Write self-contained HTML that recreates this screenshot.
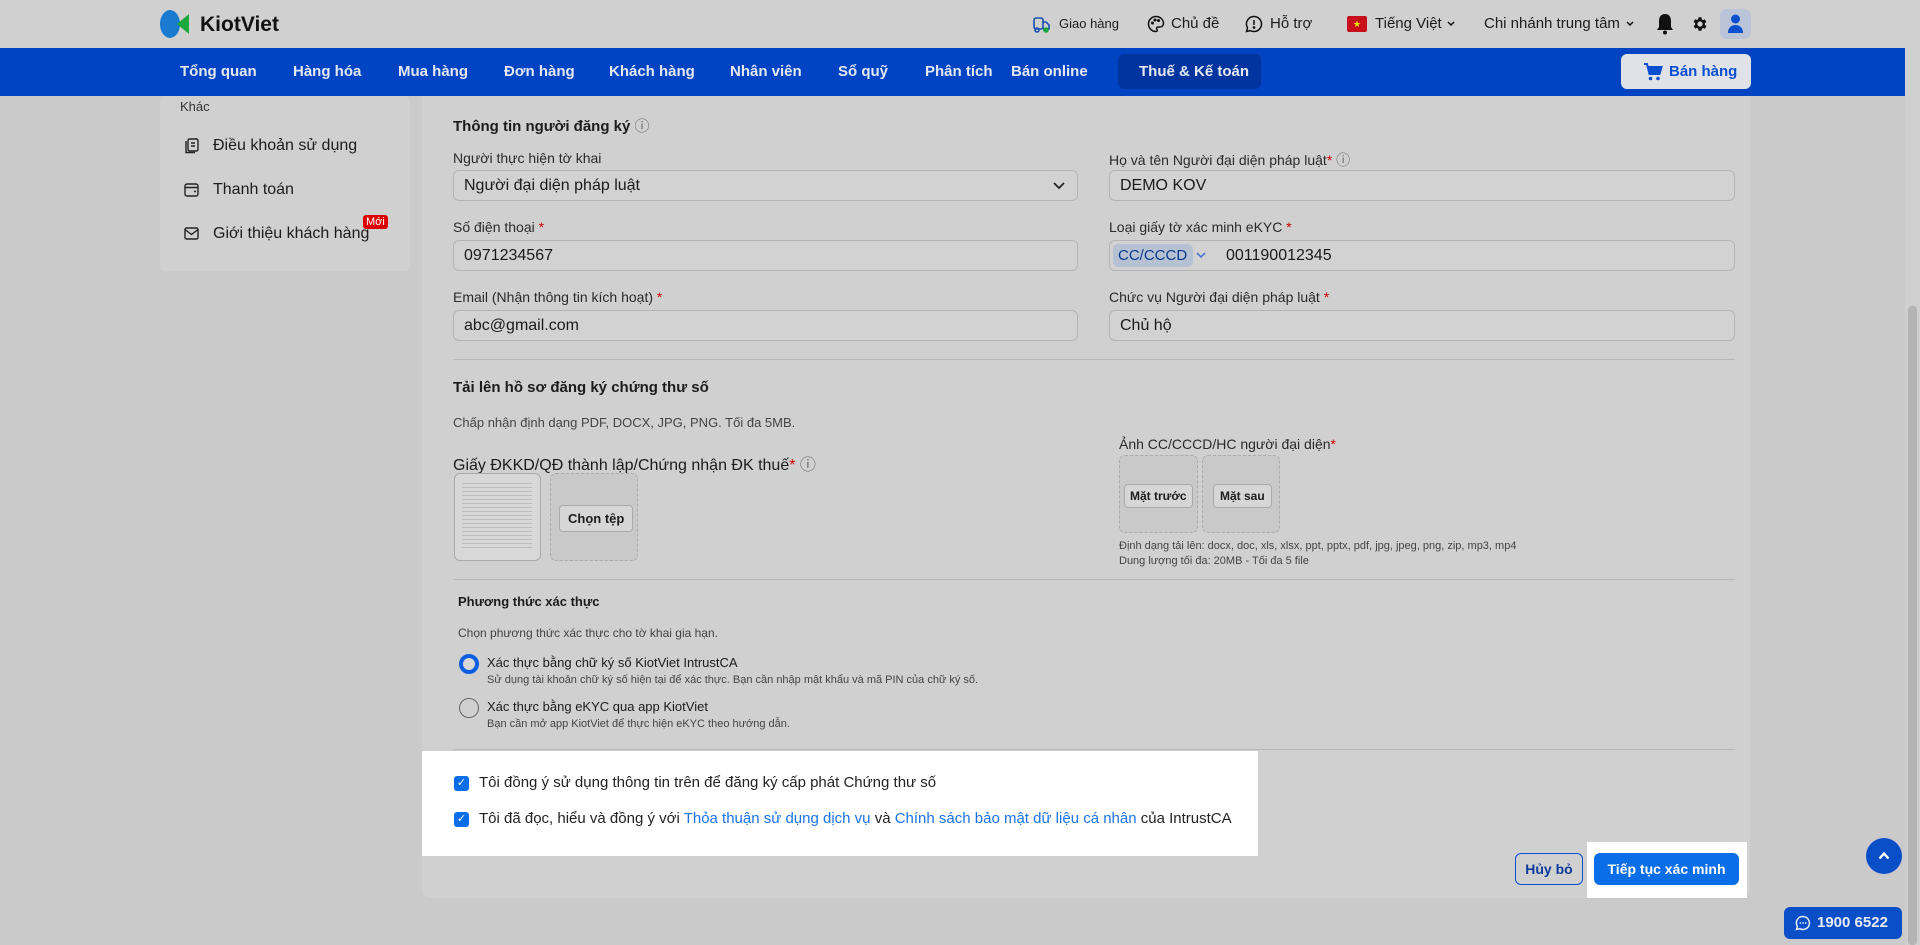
<!DOCTYPE html>
<html><head><meta charset="utf-8">
<style>
*{box-sizing:border-box;margin:0;padding:0}
body{width:1920px;height:945px;overflow:hidden;background:#cacacb;font-family:"Liberation Sans",sans-serif;color:#1c1c1c;position:relative}
.a{position:absolute;white-space:nowrap}
.top{left:0;top:0;width:1905px;height:48px;background:#d0d0d0}
.nav{left:0;top:48px;width:1905px;height:48px;background:#0044c4}
.nav .i{position:absolute;top:15px;color:#e4e8f0;font-weight:bold;font-size:15px}
.card{background:#d0d0d0;border-radius:6px}
.lbl{font-size:14px;color:#2a2a2a}
.inp{position:absolute;height:31px;border:1px solid #b4b4b4;border-radius:6px;background:#d2d2d2;font-size:16px;padding:6px 10px;color:#1a1a1a}
.req{color:#c00}
.hr{position:absolute;height:1px;background:#b8b8b8}
.box{position:absolute;border:1px dashed #aaa;border-radius:6px;background:#c9c9c9}
.btn{position:absolute;background:#d6d6d6;border:1px solid #aaa;border-radius:4px;font-weight:bold;font-size:12px;padding:5px 8px}
.cb{position:absolute;width:15px;height:15px;background:#0a6ee8;border-radius:3px;color:#fff;font-size:11px;text-align:center;line-height:15px}
.lnk{color:#1a73e8}
</style></head><body>
<div class="a top"></div>
<svg class="a" style="left:159px;top:8px" width="34" height="32" viewBox="0 0 34 32"><ellipse cx="11" cy="16" rx="10" ry="14" fill="#1a7ad0"/><path d="M30 6 L18 16 L30 26 Z" fill="#1aa83a"/></svg>
<div class="a" style="left:200px;top:13px;font-size:21px;font-weight:bold;color:#111">KiotViet</div>
<svg class="a" style="left:1032px;top:14px" width="20" height="20" viewBox="0 0 20 20" fill="none" stroke="#1a4fb0" stroke-width="1.6"><rect x="2" y="4" width="9" height="11" rx="2"/><path d="M11 8h3l3 3v4h-6"/><circle cx="5" cy="16" r="2"/><circle cx="14" cy="16" r="2" fill="#1aa83a" stroke="#1aa83a"/></svg>
<div class="a" style="left:1059px;top:16px;font-size:13px">Giao hàng</div>
<svg class="a" style="left:1147px;top:15px" width="18" height="18" viewBox="0 0 18 18" fill="none" stroke="#111" stroke-width="1.5"><path d="M9 1.5a7.5 7.5 0 1 0 0 15c1.5 0 1.5-1.5.8-2.4-.7-.9 0-2.1 1.2-2.1h2a3.5 3.5 0 0 0 3.5-3.5C16.5 4.5 13 1.5 9 1.5z"/><circle cx="5.5" cy="8" r=".8" fill="#111"/><circle cx="8" cy="5" r=".8" fill="#111"/><circle cx="11.5" cy="5.5" r=".8" fill="#111"/></svg>
<div class="a" style="left:1171px;top:15px;font-size:15px">Chủ đề</div>
<svg class="a" style="left:1245px;top:15px" width="18" height="18" viewBox="0 0 18 18" fill="none" stroke="#111" stroke-width="1.5"><path d="M9 1.5a7.5 7.5 0 0 1 0 15c-1.3 0-2.5-.3-3.6-.9L1.5 16.5l1-3.7A7.5 7.5 0 0 1 9 1.5z"/><path d="M9 5v5"/><circle cx="9" cy="12.5" r=".6" fill="#111"/></svg>
<div class="a" style="left:1270px;top:15px;font-size:15px">Hỗ trợ</div>
<div class="a" style="left:1347px;top:16px;width:20px;height:16px;background:#c8101c;border-radius:2px;color:#ee0;font-size:9px;text-align:center;line-height:16px">★</div>
<div class="a" style="left:1375px;top:15px;font-size:15px">Tiếng Việt</div>
<svg class="a" style="left:1447px;top:21px" width="8" height="6" viewBox="0 0 8 6"><path d="M1 1l3 3 3-3" stroke="#111" stroke-width="1.5" fill="none"/></svg>
<div class="a" style="left:1484px;top:15px;font-size:15px">Chi nhánh trung tâm</div>
<svg class="a" style="left:1626px;top:21px" width="8" height="6" viewBox="0 0 8 6"><path d="M1 1l3 3 3-3" stroke="#111" stroke-width="1.5" fill="none"/></svg>
<svg class="a" style="left:1656px;top:13px" width="18" height="22" viewBox="0 0 18 22"><path d="M9 1c-4 0-6 3-6 7v6l-2 3h16l-2-3V8c0-4-2-7-6-7z" fill="#111"/><circle cx="9" cy="19.5" r="2" fill="#111"/></svg>
<svg class="a" style="left:1691px;top:15px" width="18" height="18" viewBox="0 0 24 24"><path fill="#111" d="M19.4 13a7.5 7.5 0 0 0 0-2l2.1-1.6-2-3.5-2.5 1a7.6 7.6 0 0 0-1.7-1L15 3h-4l-.4 2.6a7.6 7.6 0 0 0-1.7 1l-2.5-1-2 3.5L6.6 11a7.5 7.5 0 0 0 0 2l-2.1 1.6 2 3.5 2.5-1c.5.4 1.1.7 1.7 1L11 21h4l.4-2.6c.6-.3 1.2-.6 1.7-1l2.5 1 2-3.5zM13 15.5a3.5 3.5 0 1 1 0-7 3.5 3.5 0 0 1 0 7z" transform="translate(-1 0)"/></svg>
<div class="a" style="left:1720px;top:9px;width:31px;height:30px;border-radius:7px;background:#b9c4d8"></div>
<svg class="a" style="left:1727px;top:14px" width="17" height="20" viewBox="0 0 17 20"><circle cx="8.5" cy="5" r="4.5" fill="#0b4fd0"/><path d="M1 19c0-5 3-8 7.5-8s7.5 3 7.5 8z" fill="#0b4fd0"/></svg>

<div class="a nav">
<span class="i" style="left:180px">Tổng quan</span>
<span class="i" style="left:293px">Hàng hóa</span>
<span class="i" style="left:398px">Mua hàng</span>
<span class="i" style="left:504px">Đơn hàng</span>
<span class="i" style="left:609px">Khách hàng</span>
<span class="i" style="left:730px">Nhân viên</span>
<span class="i" style="left:838px">Sổ quỹ</span>
<span class="i" style="left:925px">Phân tích</span>
<span class="i" style="left:1011px">Bán online</span>
<div class="a" style="left:1118px;top:6px;width:143px;height:35px;background:#0234a0;border-radius:6px"></div>
<span class="i" style="left:1139px">Thuế &amp; Kế toán</span>
<div class="a" style="left:1621px;top:6px;width:130px;height:35px;background:#dfe2e8;border-radius:6px;color:#0b4fd0;font-weight:bold;font-size:15px;padding:9px 0 0 48px">Bán hàng</div>
<svg class="a" style="left:1643px;top:15px" width="20" height="18" viewBox="0 0 20 18"><path d="M1 1h3l2.5 10h10l2-7H5.5" stroke="#0b4fd0" stroke-width="2" fill="none"/><path d="M6 5h12l-2 6H7z" fill="#0b4fd0"/><circle cx="7.5" cy="15.5" r="1.8" fill="#0b4fd0"/><circle cx="15" cy="15.5" r="1.8" fill="#0b4fd0"/></svg>
</div>

<div class="a card" style="left:160px;top:96px;width:250px;height:175px"></div>
<div class="a" style="left:180px;top:99px;font-size:13px;color:#333">Khác</div>
<svg class="a" style="left:185px;top:138px" width="14" height="16" viewBox="0 0 14 16" fill="none" stroke="#222" stroke-width="1.4"><rect x="3" y="1" width="10" height="12" rx="1.5"/><path d="M1 3v11.5h9M6 5h4M6 8h4"/></svg>
<div class="a" style="left:213px;top:137px;font-size:16px">Điều khoản sử dụng</div>
<svg class="a" style="left:184px;top:183px" width="15" height="14" viewBox="0 0 15 14" fill="none" stroke="#222" stroke-width="1.4"><rect x="1" y="1" width="13" height="12" rx="2"/><path d="M1 4.5h13M10 8.5h2"/></svg>
<div class="a" style="left:213px;top:181px;font-size:16px">Thanh toán</div>
<svg class="a" style="left:184px;top:227px" width="15" height="13" viewBox="0 0 15 13" fill="none" stroke="#222" stroke-width="1.4"><rect x="1" y="1" width="13" height="11" rx="1.5"/><path d="M1 2.5l6.5 5 6.5-5"/></svg>
<div class="a" style="left:213px;top:225px;font-size:16px">Giới thiệu khách hàng</div>
<div class="a" style="left:363px;top:215px;background:#d00;color:#fff;font-size:11px;padding:1px 3px;border-radius:3px">Mới</div>

<div class="a card" style="left:422px;top:96px;width:1328px;height:802px;border-radius:0 0 8px 8px"></div>
<div class="a" style="left:453px;top:115px;font-size:15px;font-weight:bold">Thông tin người đăng ký <span style="font-weight:normal;color:#666">ⓘ</span></div>

<div class="a lbl" style="left:453px;top:150px">Người thực hiện tờ khai</div>
<div class="inp" style="left:453px;top:170px;width:625px">Người đại diện pháp luật<svg style="position:absolute;right:12px;top:11px" width="12" height="8" viewBox="0 0 12 8"><path d="M1 1l5 5 5-5" stroke="#222" stroke-width="1.8" fill="none"/></svg></div>
<div class="a lbl" style="left:1109px;top:150px">Họ và tên Người đại diện pháp luật<span class="req">*</span> <span style="color:#666">ⓘ</span></div>
<div class="inp" style="left:1109px;top:170px;width:626px">DEMO KOV</div>

<div class="a lbl" style="left:453px;top:219px">Số điện thoại <span class="req">*</span></div>
<div class="inp" style="left:453px;top:240px;width:625px">0971234567</div>
<div class="a lbl" style="left:1109px;top:219px">Loại giấy tờ xác minh eKYC <span class="req">*</span></div>
<div class="inp" style="left:1109px;top:240px;width:626px;padding-left:116px">001190012345</div>
<div class="a" style="left:1113px;top:244px;height:23px;width:80px;background:#b6c2d4;border-radius:5px;color:#0b3a8c;font-size:15px;padding:3px 0 0 5px">CC/CCCD</div>
<svg class="a" style="left:1196px;top:252px" width="10" height="7" viewBox="0 0 10 7"><path d="M1 1l4 4 4-4" stroke="#3b6fd0" stroke-width="1.5" fill="none"/></svg>

<div class="a lbl" style="left:453px;top:289px">Email (Nhận thông tin kích hoạt) <span class="req">*</span></div>
<div class="inp" style="left:453px;top:310px;width:625px">abc@gmail.com</div>
<div class="a lbl" style="left:1109px;top:289px">Chức vụ Người đại diện pháp luật <span class="req">*</span></div>
<div class="inp" style="left:1109px;top:310px;width:626px">Chủ hộ</div>

<div class="hr" style="left:453px;top:359px;width:1282px"></div>
<div class="a" style="left:453px;top:379px;font-size:15px;font-weight:bold">Tải lên hồ sơ đăng ký chứng thư số</div>
<div class="a" style="left:453px;top:415px;font-size:13px;color:#444">Chấp nhận định dạng PDF, DOCX, JPG, PNG. Tối đa 5MB.</div>
<div class="a" style="left:453px;top:451px;font-size:16px">Giấy ĐKKD/QĐ thành lập/Chứng nhận ĐK thuế<span class="req">*</span> <span style="color:#666">ⓘ</span></div>
<div class="a" style="left:454px;top:473px;width:87px;height:88px;border:1px solid #aaa;border-radius:6px;background:#d8d8d8"></div>
<div class="a" style="left:462px;top:480px;width:70px;height:70px;background:repeating-linear-gradient(#d8d8d8 0 3px,#bcbcbc 3px 4px)"></div>
<div class="box" style="left:550px;top:473px;width:88px;height:88px"></div>
<div class="btn" style="left:559px;top:505px;font-size:13px">Chọn tệp</div>

<div class="a lbl" style="left:1119px;top:436px">Ảnh CC/CCCD/HC người đại diện<span class="req">*</span></div>
<div class="box" style="left:1119px;top:455px;width:79px;height:78px"></div>
<div class="box" style="left:1202px;top:455px;width:78px;height:78px"></div>
<div class="btn" style="left:1124px;top:484px;padding:4px 5px">Mặt trước</div>
<div class="btn" style="left:1213px;top:484px;padding:4px 6px">Mặt sau</div>
<div class="a" style="left:1119px;top:540px;font-size:11px;color:#444">Định dạng tải lên: docx, doc, xls, xlsx, ppt, pptx, pdf, jpg, jpeg, png, zip, mp3, mp4</div>
<div class="a" style="left:1119px;top:555px;font-size:11px;color:#444">Dung lượng tối đa: 20MB - Tối đa 5 file</div>

<div class="hr" style="left:453px;top:579px;width:1282px"></div>
<div class="a" style="left:458px;top:594px;font-size:13px;font-weight:bold">Phương thức xác thực</div>
<div class="a" style="left:458px;top:626px;font-size:12px;color:#444">Chọn phương thức xác thực cho tờ khai gia hạn.</div>
<div class="a" style="left:459px;top:654px;width:20px;height:20px;border:4px solid #0b5fe0;border-radius:50%;background:#d8d8d8"></div>
<div class="a" style="left:487px;top:655px;font-size:13px">Xác thực bằng chữ ký số KiotViet IntrustCA</div>
<div class="a" style="left:487px;top:674px;font-size:11px;color:#444">Sử dụng tài khoản chữ ký số hiện tại để xác thực. Bạn cần nhập mật khẩu và mã PIN của chữ ký số.</div>
<div class="a" style="left:459px;top:698px;width:20px;height:20px;border:1px solid #666;border-radius:50%"></div>
<div class="a" style="left:487px;top:699px;font-size:13px">Xác thực bằng eKYC qua app KiotViet</div>
<div class="a" style="left:487px;top:718px;font-size:11px;color:#444">Bạn cần mở app KiotViet để thực hiện eKYC theo hướng dẫn.</div>
<div class="hr" style="left:453px;top:749px;width:1282px"></div>

<div class="a" style="left:422px;top:751px;width:836px;height:105px;background:#fff"></div>
<div class="cb" style="left:454px;top:776px">✓</div>
<div class="a" style="left:479px;top:774px;font-size:15px;color:#222">Tôi đồng ý sử dụng thông tin trên để đăng ký cấp phát Chứng thư số</div>
<div class="cb" style="left:454px;top:812px">✓</div>
<div class="a" style="left:479px;top:810px;font-size:15px;color:#222">Tôi đã đọc, hiểu và đồng ý với <span class="lnk">Thỏa thuận sử dụng dịch vụ</span> và <span class="lnk">Chính sách bảo mật dữ liệu cá nhân</span> của IntrustCA</div>

<div class="a" style="left:1515px;top:853px;width:68px;height:32px;border:1px solid #0b4fd0;border-radius:6px;color:#0b3a9c;font-weight:bold;font-size:14px;text-align:center;line-height:30px">Hủy bỏ</div>
<div class="a" style="left:1587px;top:842px;width:160px;height:56px;background:#fff"></div>
<div class="a" style="left:1594px;top:853px;width:145px;height:32px;background:#0a6ee8;border-radius:6px;color:#fff;font-weight:bold;font-size:14px;text-align:center;line-height:32px">Tiếp tục xác minh</div>

<div class="a" style="left:1866px;top:838px;width:36px;height:36px;border-radius:50%;background:#0b4fc8"></div>
<svg class="a" style="left:1878px;top:851px" width="12" height="9" viewBox="0 0 12 9"><path d="M1.5 7.5l4.5-5 4.5 5" stroke="#fff" stroke-width="2.4" fill="none"/></svg>
<div class="a" style="left:1784px;top:907px;width:118px;height:32px;border-radius:6px;background:#0b4fc8;color:#e8ecf4;font-weight:bold;font-size:15px;line-height:32px;padding-left:33px">1900 6522</div>
<svg class="a" style="left:1795px;top:915px" width="16" height="16" viewBox="0 0 16 16"><path d="M8 1.5a6.5 6.5 0 1 1-3.2 12.2L1.5 14.5l.9-3A6.5 6.5 0 0 1 8 1.5z" stroke="#e8ecf4" stroke-width="1.5" fill="none"/><circle cx="5.3" cy="8" r=".9" fill="#e8ecf4"/><circle cx="8" cy="8" r=".9" fill="#e8ecf4"/><circle cx="10.7" cy="8" r=".9" fill="#e8ecf4"/></svg>

<div class="a" style="left:1905px;top:0;width:15px;height:945px;background:#cfcfcf"></div>
<div class="a" style="left:1908px;top:306px;width:9px;height:639px;background:#b4b4b4;border-radius:4px"></div>
</body></html>
